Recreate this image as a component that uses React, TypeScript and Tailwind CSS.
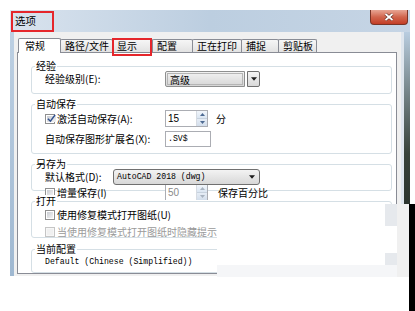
import React from 'react';

const TABS = [
  { label: '常规', w: 'w-[43px]', active: true },
  { label: '路径/文件', w: 'w-[53px]' },
  { label: '显示', w: 'w-[41px]' },
  { label: '配置', w: 'w-[41px]' },
  { label: '正在打印', w: 'w-[50px]' },
  { label: '捕捉', w: 'w-[38px]' },
  { label: '剪贴板', w: 'w-[39px]' },
];

function CheckBox({ checked, disabled }: { checked?: boolean; disabled?: boolean }) {
  return (
    <span
      className={`w-[10px] h-[10px] shrink-0 border p-px flex ${
        disabled ? 'border-[#c5c5c5] bg-[#f7f7f7]' : 'border-[#8f8f8f] bg-white'
      }`}
    >
      <span
        className={`flex-1 flex items-center justify-center ${
          disabled ? 'bg-[#f0f0f0]' : 'bg-gradient-to-br from-[#c9ccd2] to-[#f4f4f4]'
        }`}
      >
        {checked && (
          <svg viewBox="0 0 10 10" className="w-[9px] h-[9px] overflow-visible">
            <path d="M1 5.2 L3.8 8 L9 1" stroke="#30508f" strokeWidth="1.7" fill="none" />
          </svg>
        )}
      </span>
    </span>
  );
}

function Arrow() {
  return (
    <svg viewBox="0 0 7 4" className="w-[6px] h-[4px]">
      <path d="M0 0 H7 L3.5 4 Z" fill="#1b1b1b" />
    </svg>
  );
}

function Spinner({ value, dim }: { value: string; dim?: boolean }) {
  return (
    <div className="flex shrink-0 w-[43px] h-[17px] border border-[#abadb3] bg-white">
      <span
        className={`flex-1 pl-[2px] text-[10px] leading-[15px] font-['Liberation_Sans',sans-serif] ${
          dim ? 'text-[#8a8a8a]' : 'text-black'
        }`}
      >
        {value}
      </span>
      <div className="w-[11px] flex flex-col border-l border-[#d6dbe2]">
        <div className="flex-1 bg-gradient-to-b from-[#f2f6fb] to-[#dbe6f2] flex items-center justify-center border-b border-[#c7d2de]">
          <svg viewBox="0 0 5 3" className="w-[5px] h-[3px]">
            <path d="M0 3 H5 L2.5 0 Z" fill={dim ? '#a8b3c0' : '#4d6a92'} />
          </svg>
        </div>
        <div className="flex-1 bg-gradient-to-b from-[#e6edf6] to-[#d3deeb] flex items-center justify-center">
          <svg viewBox="0 0 5 3" className="w-[5px] h-[3px]">
            <path d="M0 0 H5 L2.5 3 Z" fill={dim ? '#a8b3c0' : '#4d6a92'} />
          </svg>
        </div>
      </div>
    </div>
  );
}

function Group({
  title,
  h,
  mt,
  children,
}: {
  title: string;
  h: string;
  mt: string;
  children: React.ReactNode;
}) {
  return (
    <div className={`relative ${h} ${mt} border border-[#d5dfe5] rounded-[3px] bg-white`}>
      <span className="absolute -top-[7px] left-[3px] px-px bg-white text-[10px] leading-[12px] text-black">
        {title}
      </span>
      {children}
    </div>
  );
}

export default function App() {
  return (
    <div className="relative w-[415px] h-[311px] bg-white overflow-hidden font-['Noto_Sans_CJK_SC','Noto_Sans',sans-serif] text-black">
      {/* window */}
      <div className="ml-[10px] mt-[10px] w-[400px] h-[266px] flex flex-col">
        {/* title bar */}
        <div className="h-[22px] flex items-start justify-between bg-gradient-to-r from-[#d9e3ee] via-[#bccee0] to-[#c6d5e5] pr-[2px]">
          <span className="pl-[5px] pt-[5px] text-[10.5px] leading-[12px]">选项</span>
          <div className="w-[38px] h-[15px] rounded-b-[4px] border border-t-0 border-[#7a3426] bg-gradient-to-b from-[#e7a594] via-[#d1654d] to-[#c33d25] flex items-center justify-center">
            <svg viewBox="0 0 10 8" className="w-[10px] h-[8px]">
              <path d="M1.5 1 L8.5 7 M8.5 1 L1.5 7" stroke="#5c2a22" strokeWidth="3" />
              <path d="M1.5 1 L8.5 7 M8.5 1 L1.5 7" stroke="#ffffff" strokeWidth="1.8" />
            </svg>
          </div>
        </div>

        {/* body */}
        <div className="flex-1 flex">
          <div className="w-[4px] bg-gradient-to-b from-[#bdd0e3] to-[#9fb8d1]" />
          <div className="w-[387px] bg-[#f0f0f0] pl-[3px] pr-[4px] pt-[6px] pb-[2px] flex flex-col">
            {/* tabs */}
            <div className="h-[14px] flex items-end pl-px">
              {TABS.map((t, i) =>
                t.active ? (
                  <div
                    key={t.label}
                    className={`${t.w} h-[15px] relative z-10 -mb-px bg-white border border-b-0 border-[#898c95] rounded-t-[2px] pl-[6px] text-[10px] leading-[14px]`}
                  >
                    {t.label}
                  </div>
                ) : (
                  <div
                    key={t.label}
                    className={`${t.w} h-[13px] ${i > 0 ? '-ml-px' : ''} bg-gradient-to-b from-[#f6f6f6] to-[#e2e2e2] border border-b-0 border-[#898c95] rounded-t-[2px] pl-[4px] text-[10px] leading-[12px] whitespace-nowrap`}
                  >
                    {t.label}
                  </div>
                )
              )}
            </div>

            {/* tab page */}
            <div className="flex-1 border border-[#898c95] bg-white pl-[13px] pr-[4px] flex flex-col">
              <Group title="经验" h="h-[28px]" mt="mt-[13px]">
                <div className="flex items-center pl-[13px] pt-[4px]">
                  <span className="w-[120px] text-[10px] leading-[12px]">经验级别(E):</span>
                  <div className="flex h-[16px]">
                    <div className="w-[80px] rounded-l-[2px] border border-[#8e8f8f] bg-gradient-to-b from-[#f2f2f2] to-[#d6d6d6] p-px">
                      <div className="h-full border border-[#b5b5b5] pl-[2px] text-[10px] leading-[12px]">高级</div>
                    </div>
                    <div className="w-[13px] ml-[2px] rounded-r-[2px] border border-[#707070] bg-gradient-to-b from-[#f4f4f4] to-[#d9d9d9] flex items-center justify-center">
                      <Arrow />
                    </div>
                  </div>
                </div>
              </Group>

              <Group title="自动保存" h="h-[50px]" mt="mt-[10px]">
                <div className="flex items-center pl-[13px] pt-[5px]">
                  <div className="w-[120px] flex items-center gap-[2px]">
                    <CheckBox checked />
                    <span className="text-[10px] leading-[12px]">激活自动保存(A):</span>
                  </div>
                  <Spinner value="15" />
                  <span className="ml-[8px] text-[10px] leading-[12px]">分</span>
                </div>
                <div className="flex items-center pl-[13px] pt-[4px]">
                  <span className="w-[120px] text-[10px] leading-[12px]">自动保存图形扩展名(X):</span>
                  <div className="w-[46px] h-[16px] border border-[#abadb3] bg-white pl-[2px] text-[8.2px] leading-[14px] font-['Liberation_Mono',monospace]">
                    .SV$
                  </div>
                </div>
              </Group>

              <Group title="另存为" h="h-[27px]" mt="mt-[10px]">
                <div className="flex items-center pl-[13px] pt-[4px]">
                  <span className="w-[68px] text-[10px] leading-[12px]">默认格式(D):</span>
                  <div className="w-[147px] h-[16px] rounded-[3px] border border-[#707070] bg-gradient-to-b from-[#f3f3f3] to-[#d8d8d8] flex items-center justify-between pl-[3px] pr-[4px] relative z-10">
                    <span className="text-[8.2px] leading-[12px] font-['Liberation_Mono',monospace]">AutoCAD 2018 (dwg)</span>
                    <Arrow />
                  </div>
                </div>
                <div className="h-[15px] overflow-hidden flex items-center pl-[13px]">
                  <div className="w-[120px] flex items-center gap-[2px]">
                    <CheckBox />
                    <span className="text-[10px] leading-[12px]">增量保存(I)</span>
                  </div>
                  <Spinner value="50" dim />
                  <span className="ml-[10px] text-[10px] leading-[12px]">保存百分比</span>
                </div>
              </Group>

              <Group title="打开" h="h-[37px]" mt="mt-[10px]">
                <div className="flex items-center gap-[2px] pl-[13px] pt-[7px]">
                  <CheckBox />
                  <span className="text-[10px] leading-[12px]">使用修复模式打开图纸(U)</span>
                </div>
                <div className="flex items-center gap-[2px] pl-[13px] pt-[5px]">
                  <CheckBox disabled />
                  <span className="text-[10px] leading-[12px] text-[#9a9a9a]">当使用修复模式打开图纸时隐藏提示(H)</span>
                </div>
              </Group>

              <Group title="当前配置" h="h-[24px]" mt="mt-[11px]">
                <div className="pl-[13px] pt-[7px] text-[8.2px] leading-[10px] font-['Liberation_Mono',monospace]">
                  Default (Chinese (Simplified))
                </div>
              </Group>
            </div>
          </div>
          <div className="w-[3px] bg-[#dfe6ee]" />
          <div className="w-[6px] bg-gradient-to-b from-[#b9cde0] via-[#37423a] to-[#1e2320]" />
        </div>
      </div>

      {/* red highlight boxes */}
      <div className="absolute left-[11px] top-[11px] w-[43px] h-[21px] border-2 border-[#e5262b]" />
      <div className="absolute left-[112px] top-[38px] w-[40px] h-[18px] border-2 border-[#e5262b]" />

      {/* pasted-over fragments at bottom right */}
      <div className="absolute left-[385px] top-[204px] w-[12px] h-[38px] bg-[#e6e9ed]" />
      <div className="absolute left-[397px] top-[204px] w-[12px] h-[73px] bg-[#f0f0f0]" />
      <div className="absolute left-[217px] top-[226px] w-[180px] h-[39px] bg-white" />
      <div className="absolute left-[385px] top-[253px] w-[12px] h-[12px] bg-[#e6e9ed]" />
      <div className="absolute left-[217px] top-[265px] w-[180px] h-[12px] bg-[#f5f6f8]" />
      <div className="absolute left-[409px] top-[204px] w-[6px] h-[107px] bg-black" />
    </div>
  );
}
